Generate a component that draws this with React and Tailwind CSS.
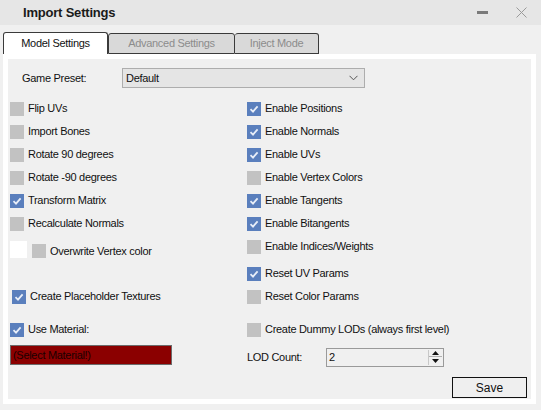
import React from "react";

const font = { fontFamily: '"Liberation Sans", Arial, sans-serif' };

const Check = ({ on }) =>
  on ? (
    <span className="w-[14px] h-[14px] shrink-0 bg-[#5a7fbd] flex items-center justify-center">
      <svg width="10" height="10" viewBox="0 0 10 10">
        <path d="M1.5 5.2 L4 7.6 L8.6 2.4" fill="none" stroke="#e8eef8" strokeWidth="1.8" />
      </svg>
    </span>
  ) : (
    <span className="block w-[14px] h-[14px] shrink-0 bg-[#c2c2c2]" />
  );

const Row = ({ on, label, className = "" }) => (
  <div className={`h-[23px] flex items-center gap-[4px] ${className}`}>
    <Check on={on} />
    <span className="text-[11px] tracking-[-0.3px] text-[#111] whitespace-nowrap">{label}</span>
  </div>
);

const leftRows = [
  [false, "Flip UVs"],
  [false, "Import Bones"],
  [false, "Rotate 90 degrees"],
  [false, "Rotate -90 degrees"],
  [true, "Transform Matrix"],
  [false, "Recalculate Normals"],
];

const rightRows = [
  [true, "Enable Positions"],
  [true, "Enable Normals"],
  [true, "Enable UVs"],
  [false, "Enable Vertex Colors"],
  [true, "Enable Tangents"],
  [true, "Enable Bitangents"],
  [false, "Enable Indices/Weights"],
];

export default function App() {
  return (
    <div className="w-[541px] h-[410px] bg-[#f0f0f0] overflow-hidden" style={font}>
      {/* title bar */}
      <div className="h-[25px] bg-[#e6e6e6] flex items-center pl-[23px]">
        <span className="text-[13px] tracking-[-0.2px] font-bold text-[#1a1a1a]">Import Settings</span>
        <div className="ml-auto flex items-center">
          <span className="w-[11px] h-[3px] bg-[#7a7a7a] mr-[28px]" />
          <svg width="11" height="11" viewBox="0 0 11 11" className="mr-[14px]">
            <path d="M0.5 0.5 L10.5 10.5 M10.5 0.5 L0.5 10.5" stroke="#9a9a9a" strokeWidth="1" />
          </svg>
        </div>
      </div>

      {/* tabs */}
      <div className="h-[29px] flex items-end pl-[3px] text-[11px] tracking-[-0.3px]">
        <div className="w-[105px] h-[22px] bg-white border border-b-0 border-[#3a3a3a] rounded-t-[3px] flex items-center justify-center text-[#111]">
          Model Settings
        </div>
        <div className="w-[127px] h-[21px] bg-[#d9d9d9] border border-[#3a3a3a] rounded-t-[3px] flex items-center justify-center text-[#8c8c8c]">
          Advanced Settings
        </div>
        <div className="w-[84px] h-[21px] bg-[#d9d9d9] border border-l-0 border-[#3a3a3a] rounded-t-[3px] flex items-center justify-center text-[#8c8c8c]">
          Inject Mode
        </div>
      </div>

      {/* tab page */}
      <div className="ml-[3px] w-[533px] h-[350px] bg-white p-[5px]">
        <div className="w-[523px] h-[340px] bg-[#f0f0f0] pt-[9px] text-[11px] tracking-[-0.3px] text-[#111]">
          <div className="h-[20px] flex items-center pl-[14px]">
            <span className="w-[100px]">Game Preset:</span>
            <div className="w-[243px] h-[20px] bg-[#e5e5e5] border border-[#adadad] flex items-center pl-[3px] pr-[6px]">
              <span>Default</span>
              <svg width="9" height="6" viewBox="0 0 9 6" className="ml-auto">
                <path d="M0.5 0.8 L4.5 4.8 L8.5 0.8" fill="none" stroke="#555" strokeWidth="1" />
              </svg>
            </div>
          </div>

          <div className="mt-[9px] flex">
            {/* left column */}
            <div className="w-[237px] pl-[2px] flex flex-col">
              {leftRows.map(([on, label]) => (
                <Row key={label} on={on} label={label} />
              ))}
              <div className="h-[32px] flex items-center">
                <span className="block w-[17px] h-[17px] bg-white -mt-[3px]" />
                <span className="ml-[5px] flex">
                  <Check on={false} />
                </span>
                <span className="ml-[4px] whitespace-nowrap">Overwrite Vertex color</span>
              </div>
              <Row on={true} label="Create Placeholder Textures" className="mt-[18px] pl-[2px]" />
              <Row on={true} label="Use Material:" className="mt-[10px]" />
              <div className="mt-[4px] w-[162px] h-[20px] bg-[#8b0000] border border-[#6b6b6b] flex items-center pl-[2px] text-[#1a0000]">
                (Select Material!)
              </div>
            </div>

            {/* right column */}
            <div className="flex-1 pl-[2px] flex flex-col">
              {rightRows.map(([on, label]) => (
                <Row key={label} on={on} label={label} />
              ))}
              <Row on={true} label="Reset UV Params" className="mt-[4px]" />
              <Row on={false} label="Reset Color Params" />
              <Row on={false} label="Create Dummy LODs (always first level)" className="mt-[10px]" />
              <div className="mt-[7px] h-[19px] flex items-center">
                <span className="w-[79px]">LOD Count:</span>
                <div className="w-[118px] h-[19px] bg-[#f0f0f0] border border-[#9a9a9a] flex items-center">
                  <span className="pl-[2px]">2</span>
                  <div className="ml-auto mr-[1px] w-[14px] h-[15px] flex flex-col border-l border-[#c8c8c8]">
                    <div className="h-[7px] flex items-center justify-center border-b border-[#b0b0b0]">
                      <svg width="7" height="4" viewBox="0 0 7 4"><path d="M0 4 L3.5 0 L7 4 Z" fill="#111" /></svg>
                    </div>
                    <div className="flex-1 flex items-center justify-center">
                      <svg width="7" height="4" viewBox="0 0 7 4"><path d="M0 0 L3.5 4 L7 0 Z" fill="#111" /></svg>
                    </div>
                  </div>
                </div>
              </div>
              <div className="mt-[10px] flex justify-end pr-[4px]">
                <button className="w-[75px] h-[21px] bg-[#efefef] border border-[#111] text-[12px] tracking-normal text-[#111]">
                  Save
                </button>
              </div>
            </div>
          </div>
        </div>
      </div>
    </div>
  );
}
